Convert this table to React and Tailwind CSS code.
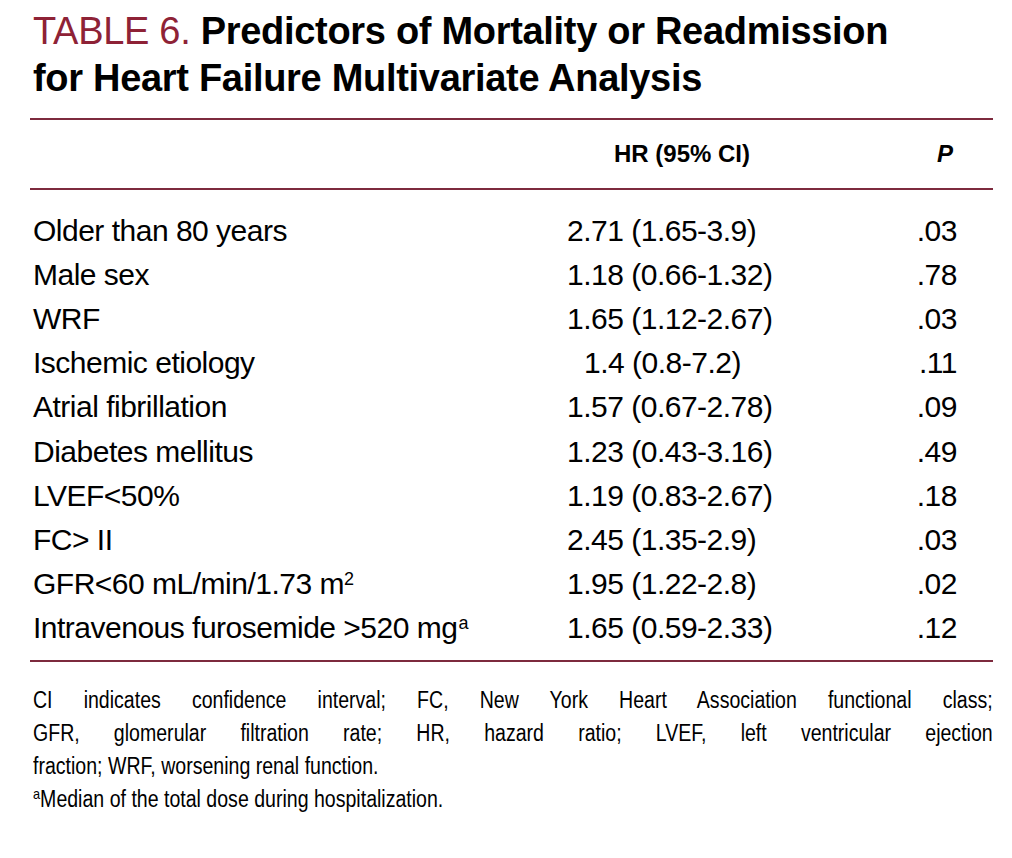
import React from "react";

const rows = [
    { label: "Older than 80 years", hr: "2.71 (1.65-3.9)", p: ".03" },
    { label: "Male sex", hr: "1.18 (0.66-1.32)", p: ".78" },
    { label: "WRF", hr: "1.65 (1.12-2.67)", p: ".03" },
    { label: "Ischemic etiology", hr: "1.4 (0.8-7.2)", p: ".11", indent: true },
    { label: "Atrial fibrillation", hr: "1.57 (0.67-2.78)", p: ".09" },
    { label: "Diabetes mellitus", hr: "1.23 (0.43-3.16)", p: ".49" },
    { label: "LVEF<50%", hr: "1.19 (0.83-2.67)", p: ".18" },
    { label: "FC> II", hr: "2.45 (1.35-2.9)", p: ".03" },
    { label: <>GFR&lt;60 mL/min/1.73 m<sup className="text-[18px]">2</sup></>, hr: "1.95 (1.22-2.8)", p: ".02" },
    { label: <>Intravenous furosemide &gt;520 mg<sup className="text-[18px] ml-[1px]">a</sup></>, hr: "1.65 (0.59-2.33)", p: ".12" },
];

export default function App() {
    return (
        <div className="w-[1012px] h-[858px] overflow-hidden bg-white text-black font-['Liberation_Sans',Arial,sans-serif]">
            <div className="pl-[30px] pr-[19px] pt-[8px]">
                {/* title */}
                <h1 className="pl-[3px] text-[38px] leading-[47px] font-bold tracking-[-0.3px]">
                    <span className="font-normal text-[#8e2236]">TABLE 6. </span>
                    Predictors of Mortality or Readmission
                    <br />
                    for Heart Failure Multivariate Analysis
                </h1>

                <div className="mt-[16px] h-[2px] bg-[#7d2a3e]" />

                {/* header */}
                <div className="flex items-center h-[68px] text-[24px] font-bold">
                    <div className="w-[537px]" />
                    <div className="w-[370px] pl-[47px]">HR (95% CI)</div>
                    <div className="italic">P</div>
                </div>

                <div className="h-[2px] bg-[#7d2a3e]" />

                {/* body */}
                <div className="pt-[18px] pb-[10px] text-[30px] tracking-[-0.5px]">
                    {rows.map((row, i) => (
                        <div key={i} className="flex items-center h-[44.2px]">
                            <div className="w-[537px] pl-[3px]">{row.label}</div>
                            <div className={`w-[300px] ${row.indent ? "pl-[17px]" : ""}`}>{row.hr}</div>
                            <div className="w-[90px] text-right">{row.p}</div>
                        </div>
                    ))}
                </div>

                <div className="h-[2px] bg-[#7d2a3e]" />

                {/* footnote - condensed look */}
                <div className="mt-[22px] pl-[3px]">
                    <div className="w-[1129px] origin-top-left scale-x-[0.85] text-[23px] leading-[33px]">
                        <div className="text-justify [text-align-last:justify]">
                            CI indicates confidence interval; FC, New York Heart Association functional class;
                        </div>
                        <div className="text-justify [text-align-last:justify]">
                            GFR, glomerular filtration rate; HR, hazard ratio; LVEF, left ventricular ejection
                        </div>
                        <div>fraction; WRF, worsening renal function.</div>
                        <div>
                            <sup className="text-[15px]">a</sup>Median of the total dose during hospitalization.
                        </div>
                    </div>
                </div>
            </div>
        </div>
    );
}
